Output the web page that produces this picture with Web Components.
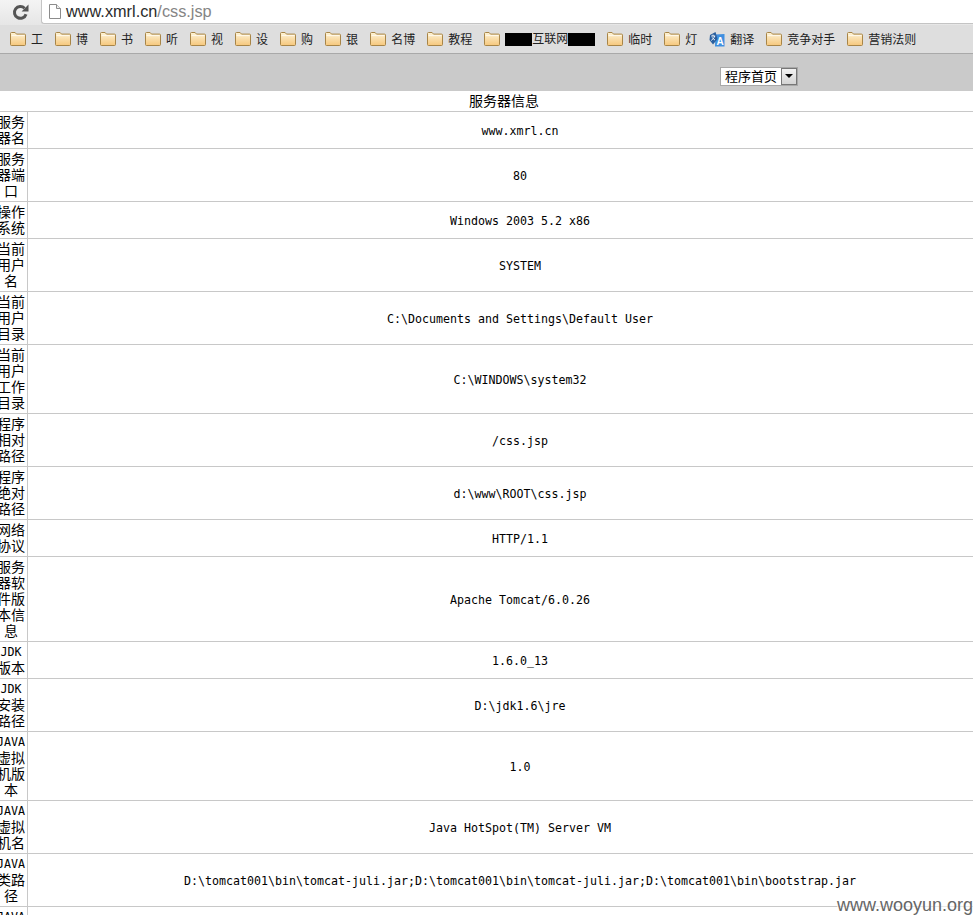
<!DOCTYPE html>
<html>
<head>
<meta charset="utf-8">
<style>
html, body { margin: 0; padding: 0; height: 915px; overflow: hidden; background: #fff; }
body { position: relative; font-family: "Liberation Sans", "Noto Sans CJK SC", sans-serif; }
</style>
</head>
<body>
<browser-bar url-host="www.xmrl.cn" url-path="/css.jsp"></browser-bar>
<bookmark-bar>
  <book-mark>工</book-mark>
  <book-mark>博</book-mark>
  <book-mark>书</book-mark>
  <book-mark>听</book-mark>
  <book-mark>视</book-mark>
  <book-mark>设</book-mark>
  <book-mark>购</book-mark>
  <book-mark>银</book-mark>
  <book-mark>名博</book-mark>
  <book-mark>教程</book-mark>
  <book-mark><span style="font-size:9px;color:#000;background:#000;">■■■</span>互联网<span style="font-size:9px;color:#000;background:#000;">■■■</span></book-mark>
  <book-mark>临时</book-mark>
  <book-mark>灯</book-mark>
  <book-mark icon="translate">翻译</book-mark>
  <book-mark>竞争对手</book-mark>
  <book-mark>营销法则</book-mark>
</bookmark-bar>
<top-menu label="程序首页"></top-menu>
<info-table heading="服务器信息">
  <info-row value="www.xmrl.cn">服务器名</info-row>
  <info-row value="80">服务器端口</info-row>
  <info-row value="Windows 2003 5.2 x86">操作系统</info-row>
  <info-row value="SYSTEM">当前用户名</info-row>
  <info-row value="C:\Documents and Settings\Default User">当前用户目录</info-row>
  <info-row value="C:\WINDOWS\system32">当前用户工作目录</info-row>
  <info-row value="/css.jsp">程序相对路径</info-row>
  <info-row value="d:\www\ROOT\css.jsp">程序绝对路径</info-row>
  <info-row value="HTTP/1.1">网络协议</info-row>
  <info-row value="Apache Tomcat/6.0.26">服务器软件版本信息</info-row>
  <info-row value="1.6.0_13"><b>JDK</b>版本</info-row>
  <info-row value="D:\jdk1.6\jre"><b>JDK</b>安装路径</info-row>
  <info-row value="1.0"><b>JAVA</b>虚拟机版本</info-row>
  <info-row value="Java HotSpot(TM) Server VM"><b>JAVA</b>虚拟机名</info-row>
  <info-row value="D:\tomcat001\bin\tomcat-juli.jar;D:\tomcat001\bin\tomcat-juli.jar;D:\tomcat001\bin\bootstrap.jar"><b>JAVA</b>类路径</info-row>
  <info-row value=""><b>JAVA</b>库路径</info-row>
</info-table>
<water-mark>www.wooyun.org</water-mark>

<script>
class BrowserBar extends HTMLElement {
    constructor() {
        super();
        this.attachShadow({mode: "open"});
    }
    connectedCallback() {
        this.shadowRoot.innerHTML = `
        <style>
        :host { display: flex; height: 25px; background: linear-gradient(#f4f4f4, #e6e6e6); box-sizing: border-box; }
        .reload { width: 41px; display: flex; align-items: center; justify-content: center; padding-bottom: 1px; box-sizing: border-box; }
        .omni { flex: 1; display: flex; align-items: center; gap: 5px; height: 24px; padding: 0 0 0 7px; box-sizing: border-box;
            background: #fff; border-left: 1px solid #c4c4c4; border-bottom: 1px solid #c4c4c4; border-bottom-left-radius: 3px; }
        .url { font: 16.3px "Liberation Sans", sans-serif; color: #2a2a2a; }
        .url span { color: #858585; }
        </style>
        <div class="reload">
            <svg width="17" height="17" viewBox="0 0 17 17">
                <path d="M14 10.2A5.9 5.9 0 1 1 12.6 4.3" fill="none" stroke="#555" stroke-width="3"/>
                <path d="M9.6 7.4h6.9V.5z" fill="#555"/>
            </svg>
        </div>
        <div class="omni">
            <svg width="12" height="15" viewBox="0 0 12 15">
                <path d="M.5.5h7l4 4v10H.5z" fill="#fff" stroke="#8c8c8c"/>
                <path d="M7.5.5v4h4" fill="#eee" stroke="#8c8c8c"/>
            </svg>
            <div class="url">${this.getAttribute("url-host")}<span>${this.getAttribute("url-path")}</span></div>
        </div>`;
    }
}
customElements.define("browser-bar", BrowserBar);

class BookmarkBar extends HTMLElement {
    constructor() {
        super();
        this.attachShadow({mode: "open"});
        this.shadowRoot.innerHTML = `
        <style>
        :host { display: flex; align-items: center; gap: 12px; height: 29px; padding: 0 0 0 10px; box-sizing: border-box;
            background: #dedede; border-bottom: 1px solid #a9a9a9; }
        </style>
        <slot></slot>`;
    }
}
customElements.define("bookmark-bar", BookmarkBar);

class BookMark extends HTMLElement {
    constructor() {
        super();
        this.attachShadow({mode: "open"});
    }
    connectedCallback() {
        const folder = `<svg width="16" height="14" viewBox="0 0 16 14">
            <defs><linearGradient id="f" x1="0" y1="0" x2="0" y2="1"><stop offset="0" stop-color="#fdf3d6"/><stop offset="1" stop-color="#f6c77c"/></linearGradient></defs>
            <path d="M.5 3V1.5q0-1 1-1h3.6l1.4 1.6h8q1 0 1 1v9.4q0 1-1 1h-13q-1 0-1-1z" fill="url(#f)" stroke="#a88547"/>
            <path d="M1.5 3.6h13" stroke="#fff" stroke-opacity=".7"/>
        </svg>`;
        const translate = `<svg width="16" height="16" viewBox="0 0 16 16">
            <path d="M6.5 3.5 15.5 3v12.5H6z" fill="#3f8fe0"/>
            <text x="7.6" y="13.6" font-family="Liberation Sans" font-size="10" font-weight="bold" fill="#fff">A</text>
            <path d="M1 4 6.5 1l2 7-4.5 5.5L.5 9z" fill="#2a5f9e"/>
            <path d="M2.2 5h4M4 3.6v1.4M5.6 5c-.4 2-1.6 3.4-3.4 4.4M3.2 6.4c.6 1.2 1.6 2 2.8 2.6" fill="none" stroke="#fff" stroke-width=".9"/>
        </svg>`;
        const icon = this.getAttribute("icon") === "translate" ? translate : folder;
        this.shadowRoot.innerHTML = `
        <style>
        :host { display: flex; align-items: center; gap: 5px; font: 12px/16px "Noto Sans CJK SC", "Liberation Sans", sans-serif; color: #222; white-space: nowrap; }
        svg { display: block; flex: none; }
        </style>
        ${icon}<span><slot></slot></span>`;
    }
}
customElements.define("book-mark", BookMark);

class TopMenu extends HTMLElement {
    constructor() {
        super();
        this.attachShadow({mode: "open"});
    }
    connectedCallback() {
        this.shadowRoot.innerHTML = `
        <style>
        :host { display: flex; align-items: center; height: 37px; padding: 7px 0 0 720px; box-sizing: border-box; background: #cacaca; }
        .box { display: flex; width: 78px; height: 19px; box-sizing: border-box; background: #fff; border: 1px solid #a8a8a8; }
        .text { flex: 1; text-align: center; font: 13px/16px "Noto Sans CJK SC", sans-serif; color: #000; }
        .btn { width: 16px; background: linear-gradient(#f2f2f2, #d4d4d4); border: 1px solid #777; box-sizing: border-box; display: flex; align-items: center; justify-content: center; }
        .btn i { border: 4px solid transparent; border-top: 4px solid #000; border-bottom: 0; }
        </style>
        <div class="box"><div class="text">${this.getAttribute("label")}</div><div class="btn"><i></i></div></div>`;
    }
}
customElements.define("top-menu", TopMenu);

class InfoTable extends HTMLElement {
    constructor() {
        super();
        this.attachShadow({mode: "open"});
    }
    connectedCallback() {
        this.shadowRoot.innerHTML = `
        <style>
        /* the table is wider than the window and starts left of it */
        :host { display: block; width: 1016px; margin-left: -4px; }
        .head { height: 20px; text-align: center; font: 14px/18px "Noto Sans CJK SC", sans-serif; color: #000; border-bottom: 1px solid #c8c8c8; }
        </style>
        <div class="head">${this.getAttribute("heading")}</div>
        <slot></slot>`;
    }
}
customElements.define("info-table", InfoTable);

class InfoRow extends HTMLElement {
    constructor() {
        super();
        this.attachShadow({mode: "open"});
    }
    connectedCallback() {
        this.shadowRoot.innerHTML = `
        <style>
        :host { display: flex; border-bottom: 1px solid #c8c8c8; }
        .label { flex: none; width: 32px; box-sizing: border-box; padding: 1px 1px 3px 0; border-right: 1px solid #c8c8c8;
            text-align: center; font: 14px/16px "Noto Sans CJK SC", sans-serif; color: #000; }
        ::slotted(b) { display: block; font: 11.63px/13px "DejaVu Sans Mono", monospace; padding-top: 3px; }
        .value { flex: 1; display: flex; align-items: center; justify-content: center; padding-top: 2px;
            font: 11.63px/16px "DejaVu Sans Mono", "Noto Sans CJK SC", monospace; color: #000; white-space: pre; }
        </style>
        <div class="label"><slot></slot></div>
        <div class="value">${this.getAttribute("value")}</div>`;
    }
}
customElements.define("info-row", InfoRow);

class WaterMark extends HTMLElement {
    constructor() {
        super();
        this.attachShadow({mode: "open"});
        this.shadowRoot.innerHTML = `
        <style>
        :host { position: absolute; right: 0; top: 895px; font: 18px/20px "Liberation Sans", sans-serif; color: #666; background: rgba(255,255,255,.6); }
        </style>
        <slot></slot>`;
    }
}
customElements.define("water-mark", WaterMark);
</script>
</body>
</html>
